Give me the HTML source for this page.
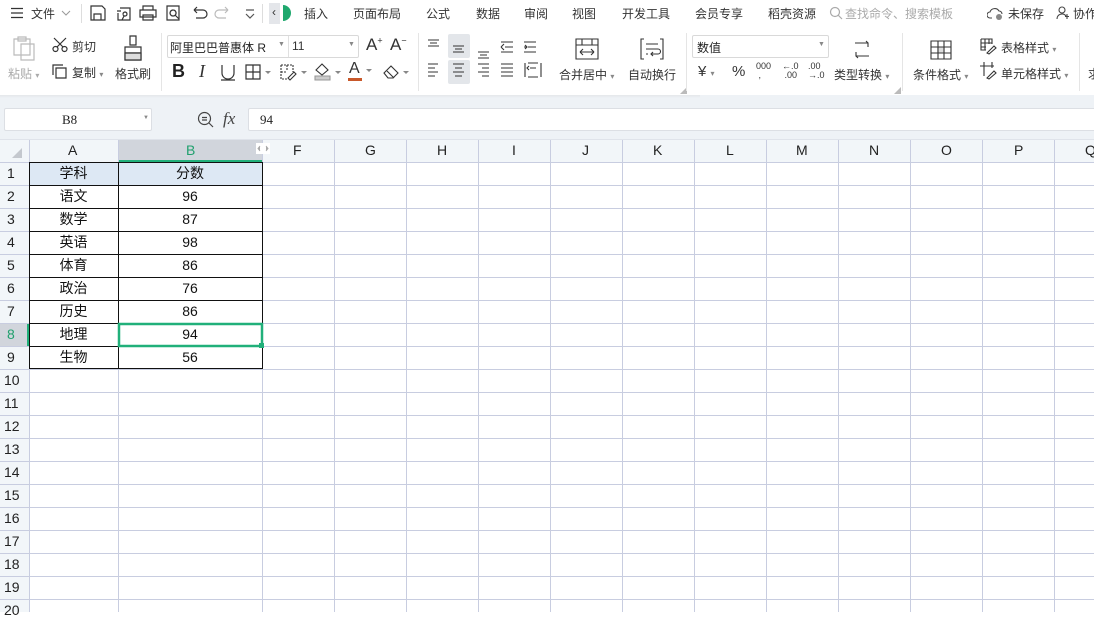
<!DOCTYPE html>
<html><head><meta charset="utf-8"><style>
*{margin:0;padding:0;box-sizing:border-box}
body{width:1094px;height:612px;overflow:hidden;background:#fff;font-family:"Liberation Sans","Noto Sans CJK SC",sans-serif;color:#222;position:relative;font-size:12px}
.a{position:absolute;white-space:nowrap}
.t{font-size:12px;color:#333}
.g{color:#aaa}
.ic{position:absolute}
</style></head><body>
<!-- top bar -->
<div class="a" style="left:0;top:0;width:1094px;height:27px;background:#fff"></div>
<svg class="ic" style="left:10px;top:7px" width="14" height="12"><path d="M1 1.5H13M1 6H13M1 10.5H13" stroke="#333" stroke-width="1.2"/></svg>
<div class="a t" style="left:31px;top:5px">文件</div>
<svg class="ic" style="left:61px;top:10px" width="10" height="6"><path d="M1 1L5 5L9 1" stroke="#999" fill="none"/></svg>
<div class="a" style="left:81px;top:4px;width:1px;height:19px;background:#ddd"></div>
<svg class="ic" style="left:90px;top:5px" width="170" height="16" fill="none" stroke="#333" stroke-width="1.2">
<path d="M1 1H12L15 4V15H1Z M4 15V9H11V15"/>
<path d="M30 3H40V15H28V8 M27 6L31 6 M33 9a2 2 0 1 1 0 .1 M34 11L32 15"/>
<path d="M53 5V1H63V5 M50 5H66V12H50Z M53 10H63V15H53Z"/>
<path d="M77 1H89V15H77Z M83 5a3 3 0 1 0 .1 0 M85 10L89 14"/>
<path d="M104 5H113a4 4 0 0 1 0 8H106 M104 5L107 2 M104 5L107 8"/>
<path d="M138 5H129a4 4 0 0 0 0 8H136 M138 5L135 2 M138 5L135 8" stroke="#bbb"/>
<path d="M156 5H164 M156 9L160 13L164 9" stroke="#555"/>
</svg>
<div class="a" style="left:262px;top:4px;width:1px;height:19px;background:#ddd"></div>
<div class="a" style="left:269px;top:3px;width:11px;height:21px;background:#e4e6ea"></div>
<div class="a t" style="left:272px;top:5px">‹</div>
<svg class="ic" style="left:283px;top:5px" width="8" height="16"><path d="M0 0A8 8 0 0 1 0 16Z" fill="#1fa86e"/></svg>
<div class="a t" style="left:304px;top:5px">插入</div>
<div class="a t" style="left:353px;top:5px">页面布局</div>
<div class="a t" style="left:426px;top:5px">公式</div>
<div class="a t" style="left:476px;top:5px">数据</div>
<div class="a t" style="left:524px;top:5px">审阅</div>
<div class="a t" style="left:572px;top:5px">视图</div>
<div class="a t" style="left:622px;top:5px">开发工具</div>
<div class="a t" style="left:695px;top:5px">会员专享</div>
<div class="a t" style="left:768px;top:5px;width:72px;overflow:hidden">稻壳资源</div>
<svg class="ic" style="left:829px;top:6px" width="14" height="14" fill="none" stroke="#aaa" stroke-width="1.2"><circle cx="6" cy="6" r="4.5"/><path d="M9 9L13 13"/></svg>
<div class="a t g" style="left:845px;top:5px">查找命令、搜索模板</div>
<svg class="ic" style="left:987px;top:6px" width="18" height="15" fill="none" stroke="#444" stroke-width="1.1"><path d="M5 12H3a3 3 0 0 1 0-6a5 5 0 0 1 9-1a3 3 0 0 1 3 3"/><circle cx="12" cy="11" r="3" fill="#888" stroke="none"/></svg>
<div class="a t" style="left:1008px;top:5px">未保存</div>
<svg class="ic" style="left:1056px;top:6px" width="14" height="14" fill="none" stroke="#444" stroke-width="1.1"><circle cx="6" cy="4" r="3"/><path d="M1 13a5 5 0 0 1 9-3 M11 8V13 M9 10.5H13"/></svg>
<div class="a t" style="left:1073px;top:5px">协作</div>

<!-- ribbon -->
<svg class="ic" style="left:12px;top:35px" width="24" height="26" fill="none" stroke="#bbb" stroke-width="1.2"><path d="M2 4H18V20H2Z M6 2H14V6H6Z M9 9H22V25H9Z" fill="#fff"/></svg>
<div class="a t g" style="left:8px;top:65px">粘贴 <span style="font-size:8px">▾</span></div>
<svg class="ic" style="left:52px;top:37px" width="16" height="16" fill="none" stroke="#333" stroke-width="1.2"><circle cx="3.5" cy="12" r="2.5"/><circle cx="12.5" cy="12" r="2.5"/><path d="M5 10L14 1 M11 10L2 1"/></svg>
<div class="a t" style="left:72px;top:38px">剪切</div>
<svg class="ic" style="left:52px;top:64px" width="16" height="16" fill="none" stroke="#333" stroke-width="1.2"><path d="M4 4H14V14H4Z M1 11V1H11"/></svg>
<div class="a t" style="left:72px;top:64px">复制 <span style="font-size:8px;color:#888">▾</span></div>
<svg class="ic" style="left:122px;top:35px" width="22" height="27" fill="none" stroke="#333" stroke-width="1.2"><path d="M8 1H14V10H8Z M3 12H19V25H3Z M3 18H19" /><path d="M3 18H19V25H3Z" fill="#ddd"/></svg>
<div class="a t" style="left:115px;top:65px">格式刷</div>
<div class="a" style="left:161px;top:33px;width:1px;height:58px;background:#e5e5e5"></div>
<div class="a" style="left:167px;top:35px;width:192px;height:23px;border:1px solid #d9d9d9;border-radius:2px"></div>
<div class="a" style="left:288px;top:36px;width:1px;height:21px;background:#e0e0e0"></div>
<div class="a t" style="left:170px;top:39px;color:#222">阿里巴巴普惠体 R</div>
<div class="a" style="left:278px;top:41px;font-size:7px;color:#888">▼</div>
<div class="a t" style="left:292px;top:39px">11</div>
<div class="a" style="left:348px;top:41px;font-size:7px;color:#888">▼</div>
<div class="a" style="left:366px;top:35px;font-size:17px;color:#333">A<sup style="font-size:9px">+</sup></div>
<div class="a" style="left:390px;top:35px;font-size:17px;color:#333">A<sup style="font-size:9px">−</sup></div>
<div class="a" style="left:172px;top:61px;font-size:18px;font-weight:bold;color:#222">B</div>
<div class="a" style="left:199px;top:61px;font-size:18px;font-style:italic;font-family:'Liberation Serif',serif;color:#333">I</div>
<svg class="ic" style="left:220px;top:64px" width="16" height="17" fill="none" stroke="#333" stroke-width="1.2"><path d="M2 1V9a5 5 0 0 0 12 0V1 M1 16H15"/></svg>
<svg class="ic" style="left:245px;top:64px" width="32" height="16" fill="none" stroke="#333" stroke-width="1.2"><path d="M1 1H15V15H1Z M8 1V15 M1 8H15"/><path d="M20 7L23 10L26 7Z" fill="#888" stroke="none"/></svg>
<svg class="ic" style="left:280px;top:64px" width="30" height="17" fill="none" stroke="#333" stroke-width="1.1"><path d="M1 1H13V8 M1 1V15H7 M1 8H7 M7 1V7" stroke-dasharray="2 1"/><path d="M8 14L14 8L16 10L10 16Z"/><path d="M21 7L24 10L27 7Z" fill="#888" stroke="none"/></svg>
<svg class="ic" style="left:313px;top:62px" width="30" height="20" fill="none" stroke="#333" stroke-width="1.1"><path d="M3 8L9 2L15 8L9 13Z"/><path d="M2 14H17V18H2Z" fill="#ccc" stroke="#999"/><path d="M22 9L25 12L28 9Z" fill="#888" stroke="none"/></svg>
<div class="a" style="left:349px;top:60px;font-size:16px;color:#333">A</div>
<div class="a" style="left:348px;top:78px;width:14px;height:3px;background:#c8582a"></div>
<svg class="ic" style="left:365px;top:68px" width="8" height="6"><path d="M1 1L4 4L7 1Z" fill="#888"/></svg>
<svg class="ic" style="left:382px;top:63px" width="30" height="18" fill="none" stroke="#333" stroke-width="1.1"><path d="M2 10L9 3L16 10L11 15H6Z M5 8L12 15"/><path d="M21 8L24 11L27 8Z" fill="#888" stroke="none"/></svg>
<div class="a" style="left:418px;top:33px;width:1px;height:58px;background:#e5e5e5"></div>
<!-- alignment -->
<div class="a" style="left:448px;top:34px;width:22px;height:24px;background:#e3e6ea;border-radius:2px"></div>
<div class="a" style="left:448px;top:60px;width:22px;height:24px;background:#e3e6ea;border-radius:2px"></div>
<svg class="ic" style="left:425px;top:38px" width="122" height="44" fill="none" stroke="#333" stroke-width="1.1">
<path d="M3 2H14M5 5H12M3 8H14"/>
<path d="M28 8H39M30 11H37M28 14H39"/>
<path d="M53 14H64M55 17H62M53 20H64"/>
<path d="M76 4H88M80 9H88M76 14H88M76 9L79 6M76 9L79 12"/>
<path d="M99 4H111M103 9H111M99 14H111M99 9H102M100 7L102 9L100 11"/>
<path d="M3 26H13M3 30H10M3 34H13M3 38H10"/>
<path d="M28 26H39M30 30H37M28 34H39M30 38H37"/>
<path d="M53 26H64M57 30H64M53 34H64M57 38H64"/>
<path d="M76 26H88M76 30H88M76 34H88M76 38H88"/>
<path d="M100 25V39M116 25V39M103 25H113M103 39H113M105 30H111M104 32L102 30L104 28"/>
</svg>
<svg class="ic" style="left:575px;top:38px" width="24" height="22" fill="none" stroke="#333" stroke-width="1.1"><path d="M1 1H23V21H1Z M1 7H23 M7 1V7 M17 1V7 M5 14H19M5 14L8 11M5 14L8 17M19 14L16 11M19 14L16 17"/></svg>
<div class="a t" style="left:559px;top:66px">合并居中 <span style="font-size:8px;color:#888">▾</span></div>
<svg class="ic" style="left:640px;top:38px" width="24" height="22" fill="none" stroke="#333" stroke-width="1.1"><path d="M4 1H1V21H4M20 1H23V21H20M6 6H18M6 11H18a2 2 0 0 1 0 5H11M13 14L11 16L13 18M6 16H8"/></svg>
<div class="a t" style="left:628px;top:66px">自动换行</div>
<div a class="a" style="left:680px;top:86px;font-size:7px;color:#bbb">◢</div>
<div class="a" style="left:686px;top:33px;width:1px;height:58px;background:#e5e5e5"></div>
<!-- number -->
<div class="a" style="left:692px;top:35px;width:137px;height:23px;border:1px solid #d9d9d9;border-radius:2px"></div>
<div class="a t" style="left:697px;top:39px;color:#222">数值</div>
<div class="a" style="left:818px;top:41px;font-size:7px;color:#888">▼</div>
<div class="a" style="left:698px;top:63px;font-size:15px;color:#333">¥ <span style="font-size:8px;color:#888">▾</span></div>
<div class="a" style="left:732px;top:63px;font-size:15px;color:#333">%</div>
<div class="a" style="left:756px;top:62px;font-size:9px;line-height:9px;color:#333">000<br>&nbsp;,</div>
<div class="a" style="left:782px;top:62px;font-size:9px;line-height:9px;color:#333">←.0<br>&nbsp;.00</div>
<div class="a" style="left:808px;top:62px;font-size:9px;line-height:9px;color:#333">.00<br>→.0</div>
<svg class="ic" style="left:850px;top:38px" width="24" height="24" fill="none" stroke="#333" stroke-width="1.1"><path d="M5 5H18V9M16 3L18 5 M19 18H6V14M8 20L6 18"/></svg>
<div class="a t" style="left:834px;top:66px">类型转换 <span style="font-size:8px;color:#888">▾</span></div>
<div class="a" style="left:894px;top:86px;font-size:7px;color:#bbb">◢</div>
<div class="a" style="left:902px;top:33px;width:1px;height:58px;background:#e5e5e5"></div>
<svg class="ic" style="left:930px;top:40px" width="22" height="20" fill="none" stroke="#333" stroke-width="1.1"><path d="M1 1H21V19H1Z M1 7H21M1 13H21M8 1V19M14 1V19"/><path d="M8 7H14V13H8Z" fill="#ddd"/></svg>
<div class="a t" style="left:913px;top:66px">条件格式 <span style="font-size:8px;color:#888">▾</span></div>
<svg class="ic" style="left:980px;top:38px" width="18" height="17" fill="none" stroke="#333" stroke-width="1.1"><path d="M1 1H12V6M1 1V12H6M1 5H12M1 9H6M5 1V12M9 1V6M7 15L14 8L16 10L9 16Z"/></svg>
<div class="a t" style="left:1001px;top:39px">表格样式 <span style="font-size:8px;color:#888">▾</span></div>
<svg class="ic" style="left:980px;top:62px" width="18" height="18" fill="none" stroke="#333" stroke-width="1.1"><path d="M4 0V14M0 4H14M12 0V6M7 16L14 9L16 11L9 17Z"/></svg>
<div class="a t" style="left:1001px;top:65px">单元格样式 <span style="font-size:8px;color:#888">▾</span></div>
<div class="a" style="left:1079px;top:33px;width:1px;height:58px;background:#e5e5e5"></div>
<div class="a t" style="left:1088px;top:65px">求</div>
<!-- shadow strip -->
<div class="a" style="left:0;top:95px;width:1094px;height:45px;background:#eef2f6"></div>
<div class="a" style="left:0;top:95px;width:700px;height:3px;background:linear-gradient(#e4e7ea,#eef2f6)"></div>
<div class="a" style="left:0;top:139px;width:1094px;height:1px;background:#dfe3ea"></div>
<!-- formula bar -->
<div class="a" style="left:4px;top:108px;width:148px;height:23px;background:#fff;border:1px solid #dcdfe4;border-radius:2px"></div>
<div class="a" style="left:62px;top:112px;font-family:'Liberation Serif',serif;font-size:13px;color:#222">B8</div>
<div class="a" style="left:143px;top:115px;font-size:6px;color:#888">▼</div>
<svg class="ic" style="left:197px;top:111px" width="18" height="18" fill="none" stroke="#444" stroke-width="1.2"><circle cx="7.5" cy="7.5" r="6"/><path d="M5 6.5H10M5 9H10M12 12L16 16"/></svg>
<div class="a" style="left:223px;top:109px;font-family:'Liberation Serif',serif;font-style:italic;font-size:17px;color:#444">fx</div>
<div class="a" style="left:248px;top:108px;width:850px;height:23px;background:#fff;border:1px solid #dcdfe4;border-radius:2px"></div>
<div class="a" style="left:260px;top:112px;font-family:'Liberation Serif',serif;font-size:13px;color:#222">94</div>

<!-- grid -->
<div class="a" style="left:0;top:140px;width:1094px;height:22px;background:#f2f6f9"></div>
<div class="a" style="left:0;top:162px;width:29px;height:450px;background:#f2f6f9"></div>
<div class="a" style="left:118px;top:140px;width:144px;height:22px;background:#d1d5dc"></div>
<div class="a" style="left:118px;top:160px;width:144px;height:2px;background:#21b07a"></div>
<div class="a" style="left:0;top:323px;width:29px;height:23px;background:#d1d5dc"></div>
<div class="a" style="left:27px;top:323px;width:2px;height:23px;background:#21b07a"></div>
<div class="a" style="left:29px;top:162px;width:233px;height:23px;background:#dde8f4"></div>
<svg class="ic" style="left:0;top:140px" width="1094" height="472">
<path d="M12 18L22 8V18Z" fill="#c4c8ce"/>
<g stroke="#c8cde0" stroke-width="1">
<path d="M29.5 0V472M118.5 0V472M262.5 0V472M334.5 0V472M406.5 0V472M478.5 0V472M550.5 0V472M622.5 0V472M694.5 0V472M766.5 0V472M838.5 0V472M910.5 0V472M982.5 0V472M1054.5 0V472"/>
<path d="M0 22.5H1094M0 45.5H1094M0 68.5H1094M0 91.5H1094M0 114.5H1094M0 137.5H1094M0 160.5H1094M0 183.5H1094M0 206.5H1094M0 229.5H1094M0 252.5H1094M0 275.5H1094M0 298.5H1094M0 321.5H1094M0 344.5H1094M0 367.5H1094M0 390.5H1094M0 413.5H1094M0 436.5H1094M0 459.5H1094"/>
</g>
<g stroke="#111" stroke-width="1">
<path d="M29.5 22V229M118.5 22V229M262.5 22V229M29 22.5H263M29 45.5H263M29 68.5H263M29 91.5H263M29 114.5H263M29 137.5H263M29 160.5H263M29 183.5H263M29 206.5H263M29 228.5H263"/>
</g>
<rect x="119" y="184" width="143" height="22" fill="none" stroke="#21b07a" stroke-width="2.5"/>
<rect x="259" y="203" width="5" height="5" fill="#21b07a"/>
<rect x="256" y="3" width="14" height="11" fill="#fff"/>
<path d="M260 6L258 8.5L260 11M266 6L268 8.5L266 11" fill="#aaa" stroke="#aaa"/>
</svg>
<div style="position:absolute;left:0;top:140px;font-size:14px;color:#222">
<div class="a" style="left:68px;top:2px">A</div>
<div class="a" style="left:186px;top:2px;color:#21a06e">B</div>
<div class="a" style="left:293px;top:2px">F</div>
<div class="a" style="left:365px;top:2px">G</div>
<div class="a" style="left:437px;top:2px">H</div>
<div class="a" style="left:512px;top:2px">I</div>
<div class="a" style="left:582px;top:2px">J</div>
<div class="a" style="left:653px;top:2px">K</div>
<div class="a" style="left:726px;top:2px">L</div>
<div class="a" style="left:796px;top:2px">M</div>
<div class="a" style="left:869px;top:2px">N</div>
<div class="a" style="left:941px;top:2px">O</div>
<div class="a" style="left:1014px;top:2px">P</div>
<div class="a" style="left:1085px;top:2px">Q</div>
</div>
<div style="position:absolute;left:0;top:162px;font-size:14px;color:#222;line-height:23px">
<div class="a" style="left:7px;top:0">1</div><div class="a" style="left:7px;top:23px">2</div><div class="a" style="left:7px;top:46px">3</div><div class="a" style="left:7px;top:69px">4</div><div class="a" style="left:7px;top:92px">5</div><div class="a" style="left:7px;top:115px">6</div><div class="a" style="left:7px;top:138px">7</div><div class="a" style="left:7px;top:161px;color:#21a06e">8</div><div class="a" style="left:7px;top:184px">9</div>
<div class="a" style="left:4px;top:207px">10</div><div class="a" style="left:4px;top:230px">11</div><div class="a" style="left:4px;top:253px">12</div><div class="a" style="left:4px;top:276px">13</div><div class="a" style="left:4px;top:299px">14</div><div class="a" style="left:4px;top:322px">15</div><div class="a" style="left:4px;top:345px">16</div><div class="a" style="left:4px;top:368px">17</div><div class="a" style="left:4px;top:391px">18</div><div class="a" style="left:4px;top:414px">19</div><div class="a" style="left:4px;top:437px">20</div>
</div>
<div style="position:absolute;left:0;top:162px;font-size:14px;color:#111;line-height:23px">
<div class="a" style="left:29px;width:89px;text-align:center;top:0">学科</div><div class="a" style="left:118px;width:144px;text-align:center;top:0">分数</div>
<div class="a" style="left:29px;width:89px;text-align:center;top:23px">语文</div><div class="a" style="left:118px;width:144px;text-align:center;top:23px">96</div>
<div class="a" style="left:29px;width:89px;text-align:center;top:46px">数学</div><div class="a" style="left:118px;width:144px;text-align:center;top:46px">87</div>
<div class="a" style="left:29px;width:89px;text-align:center;top:69px">英语</div><div class="a" style="left:118px;width:144px;text-align:center;top:69px">98</div>
<div class="a" style="left:29px;width:89px;text-align:center;top:92px">体育</div><div class="a" style="left:118px;width:144px;text-align:center;top:92px">86</div>
<div class="a" style="left:29px;width:89px;text-align:center;top:115px">政治</div><div class="a" style="left:118px;width:144px;text-align:center;top:115px">76</div>
<div class="a" style="left:29px;width:89px;text-align:center;top:138px">历史</div><div class="a" style="left:118px;width:144px;text-align:center;top:138px">86</div>
<div class="a" style="left:29px;width:89px;text-align:center;top:161px">地理</div><div class="a" style="left:118px;width:144px;text-align:center;top:161px">94</div>
<div class="a" style="left:29px;width:89px;text-align:center;top:184px">生物</div><div class="a" style="left:118px;width:144px;text-align:center;top:184px">56</div>
</div>
</body></html>
